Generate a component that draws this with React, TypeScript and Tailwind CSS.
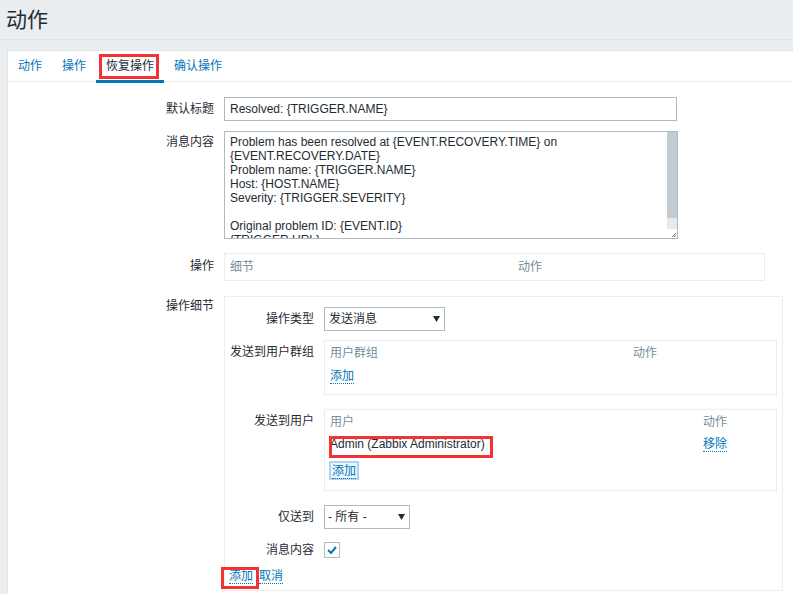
import React from 'react'

const textareaLines = [
  'Problem has been resolved at {EVENT.RECOVERY.TIME} on',
  '{EVENT.RECOVERY.DATE}',
  'Problem name: {TRIGGER.NAME}',
  'Host: {HOST.NAME}',
  'Severity: {TRIGGER.SEVERITY}',
  '',
  'Original problem ID: {EVENT.ID}',
  '{TRIGGER.URL}',
]

function DottedLink({ children, className = '' }: { children: React.ReactNode; className?: string }) {
  return (
    <span className={`text-[#0275b8] border-b border-dotted border-[#0275b8] leading-[14px] ${className}`}>
      {children}
    </span>
  )
}

function Arrow() {
  return (
    <svg width="7" height="6" viewBox="0 0 7 6" className="shrink-0">
      <path d="M0 0 L7 0 L3.5 6 Z" fill="#1f2c33" />
    </svg>
  )
}

function Mark({ className }: { className: string }) {
  // red annotation rectangle drawn over the screenshot
  return <span className={`absolute border-[3px] border-[#f23333] pointer-events-none ${className}`} />
}

export default function App() {
  return (
    <div className="min-h-[594px] bg-[#ebeef0] text-[12px] text-[#1f2c33] font-['Liberation_Sans','Noto_Sans_CJK_SC',sans-serif] overflow-hidden">
      {/* Page title */}
      <header className="h-[40px] border-b border-[#dfe4e7] pl-[6px] pt-[8px]">
        <h1 className="text-[21px] leading-[24px] font-normal">动作</h1>
      </header>

      <div className="ml-[7px] mt-[10px] bg-white border-l border-t border-[#dfe4e7] pb-[40px]">
        {/* Tabs */}
        <nav className="flex h-[31px] border-b border-[#ebeef0]">
          <span className="flex items-center px-[10px] text-[#0275b8] leading-[14px]">动作</span>
          <span className="flex items-center px-[10px] text-[#0275b8] leading-[14px]">操作</span>
          <span className="relative flex items-center px-[10px] text-[#1f2c33] leading-[14px]">
            恢复操作
            <span className="absolute left-0 right-0 bottom-[-2px] h-[3px] bg-[#0275b8]" />
            <Mark className="left-[3px] top-[3px] w-[60px] h-[25px]" />
          </span>
          <span className="flex items-center px-[10px] text-[#0275b8] leading-[14px]">确认操作</span>
        </nav>

        <div className="pt-[15px]">
          {/* 默认标题 */}
          <div className="flex gap-x-[10px]">
            <div className="w-[206px] text-right pt-[5px] leading-[14px]">默认标题</div>
            <div className="w-[453px] h-[24px] border border-[#acbbc2] px-[5px] leading-[22px]">
              Resolved: {'{TRIGGER.NAME}'}
            </div>
          </div>

          {/* 消息内容 */}
          <div className="flex gap-x-[10px] mt-[10px]">
            <div className="w-[206px] text-right pt-[4px] leading-[14px]">消息内容</div>
            <div className="w-[454px] h-[108px] border border-[#acbbc2] flex overflow-hidden">
              <div className="flex-1 pl-[5px] pt-[3px] whitespace-pre leading-[14px] overflow-hidden">
                {textareaLines.map((line, i) => (
                  <div key={i} className="h-[14px]">{line}</div>
                ))}
              </div>
              <div className="w-[10px] flex flex-col">
                <div className="h-[86px] bg-[#c1cbd0]" />
                <div className="flex-1 bg-[#e9e9e9]" />
                <div className="h-[9px] bg-white flex items-end justify-end">
                  <svg width="6" height="6" viewBox="0 0 6 6">
                    <path d="M1 5 L5 1 M3 5 L5 3" stroke="#555" strokeWidth="0.8" />
                  </svg>
                </div>
              </div>
            </div>
          </div>

          {/* 操作 */}
          <div className="flex gap-x-[10px] mt-[14px]">
            <div className="w-[206px] text-right pt-[6px] leading-[14px]">操作</div>
            <div className="w-[541px] h-[28px] border border-[#ebeef0] grid grid-cols-[288px_1fr] pl-[5px] pt-[6px] leading-[14px] text-[#768d99]">
              <span>细节</span>
              <span>动作</span>
            </div>
          </div>

          {/* 操作细节 */}
          <div className="flex gap-x-[10px] mt-[15px]">
            <div className="w-[206px] text-right pt-[3px] leading-[14px]">操作细节</div>
            <div className="w-[559px] border border-[#ebeef0] px-[5px] pt-[10px] pb-[7px]">
              <div className="grid grid-cols-[84px_1fr] gap-x-[10px]">
                {/* 操作类型 */}
                <div className="text-right pt-[5px] leading-[14px]">操作类型</div>
                <div>
                  <div className="w-[121px] h-[24px] border border-[#acbbc2] flex items-center justify-between pl-[4px] pr-[4px] leading-[14px]">
                    <span>发送消息</span>
                    <Arrow />
                  </div>
                </div>

                {/* 发送到用户群组 */}
                <div className="text-right pt-[5px] leading-[14px] mt-[9px]">发送到用户群组</div>
                <div className="mt-[9px] h-[55px] border border-[#ebeef0] px-[5px] pt-[5px] leading-[14px]">
                  <div className="grid grid-cols-[303px_1fr] text-[#768d99]">
                    <span>用户群组</span>
                    <span>动作</span>
                  </div>
                  <div className="mt-[9px]">
                    <DottedLink>添加</DottedLink>
                  </div>
                </div>

                {/* 发送到用户 */}
                <div className="text-right pt-[5px] leading-[14px] mt-[14px]">发送到用户</div>
                <div className="mt-[14px] border border-[#ebeef0] px-[5px] pt-[5px] pb-[10px] leading-[14px]">
                  <div className="grid grid-cols-[373px_1fr] text-[#768d99]">
                    <span>用户</span>
                    <span>动作</span>
                  </div>
                  <div className="grid grid-cols-[373px_1fr] mt-[8px]">
                    <span className="relative">
                      Admin (Zabbix Administrator)
                      <Mark className="-left-[1px] -top-[1px] w-[164px] h-[22px]" />
                    </span>
                    <span>
                      <DottedLink>移除</DottedLink>
                    </span>
                  </div>
                  <div className="mt-[10px] -ml-[1px]">
                    <span className="inline-block border-2 border-[#b1d2f3] bg-[#edf5fd] px-[1px] leading-[14px] pt-[1px]">
                      <DottedLink>添加</DottedLink>
                    </span>
                  </div>
                </div>

                {/* 仅送到 */}
                <div className="text-right pt-[5px] leading-[14px] mt-[14px]">仅送到</div>
                <div className="mt-[14px]">
                  <div className="w-[86px] h-[24px] border border-[#acbbc2] flex items-center justify-between pl-[3px] pr-[4px] leading-[14px]">
                    <span>- 所有 -</span>
                    <Arrow />
                  </div>
                </div>

                {/* 消息内容 checkbox */}
                <div className="text-right pt-[1px] leading-[14px] mt-[13px]">消息内容</div>
                <div className="mt-[13px]">
                  <div className="w-[16px] h-[16px] border border-[#acbbc2] flex items-center justify-center">
                    <svg width="10" height="8" viewBox="0 0 10 8">
                      <path d="M1 4 L4 7 L9 1" fill="none" stroke="#0275b8" strokeWidth="2" />
                    </svg>
                  </div>
                </div>
              </div>

              {/* buttons */}
              <div className="mt-[11px] -ml-[1px] flex leading-[14px]">
                <span className="relative">
                  <DottedLink>添加</DottedLink>
                  <Mark className="-left-[8px] -top-[2px] w-[38px] h-[22px]" />
                </span>
                <span className="ml-[6px]">
                  <DottedLink>取消</DottedLink>
                </span>
              </div>
            </div>
          </div>
        </div>
      </div>
    </div>
  )
}
